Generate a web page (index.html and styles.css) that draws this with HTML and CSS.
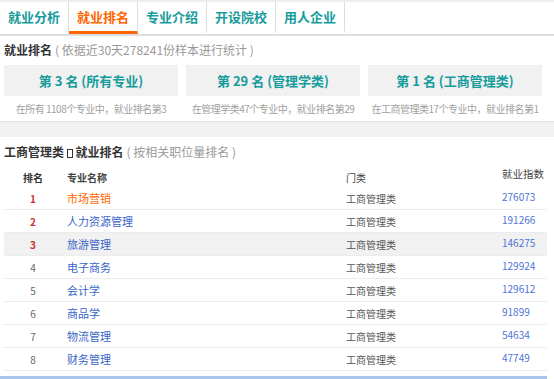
FILE: index.html
```html
<!DOCTYPE html>
<html lang="zh-CN">
<head>
<meta charset="utf-8">
<title>就业排名</title>
<link rel="stylesheet" href="styles.css">
</head>
<body>
<div class="tabs">
  <a class="tab">就业分析</a>
  <a class="tab active">就业排名</a>
  <a class="tab">专业介绍</a>
  <a class="tab">开设院校</a>
  <a class="tab">用人企业</a>
</div>

<section class="summary">
  <h2 class="title">就业排名<span class="sub">( 依据近30天278241份样本进行统计 )</span></h2>
  <div class="cards">
    <div class="card-wrap">
      <div class="card">第 3 名 (所有专业)</div>
      <p class="caption">在所有 1108个专业中，就业排名第3</p>
    </div>
    <div class="card-wrap">
      <div class="card">第 29 名 (管理学类)</div>
      <p class="caption">在管理学类47个专业中，就业排名第29</p>
    </div>
    <div class="card-wrap">
      <div class="card">第 1 名 (工商管理类)</div>
      <p class="caption">在工商管理类17个专业中，就业排名第1</p>
    </div>
  </div>
</section>
<div class="band"></div>

<section class="ranking">
  <h2 class="title">工商管理类 <span class="tofu"></span> 就业排名<span class="sub">( 按相关职位量排名 )</span></h2>
  <div class="rank-table">
    <div class="row head">
      <span class="c-rank strong">排名</span>
      <span class="c-name strong">专业名称</span>
      <span class="c-cat">门类</span>
      <span class="c-idx">就业指数</span>
    </div>
    <div class="row"><span class="c-rank top">1</span><a class="c-name hot">市场营销</a><span class="c-cat">工商管理类</span><span class="c-idx">276073</span></div>
    <div class="row"><span class="c-rank top">2</span><a class="c-name">人力资源管理</a><span class="c-cat">工商管理类</span><span class="c-idx">191266</span></div>
    <div class="row hl"><span class="c-rank top">3</span><a class="c-name">旅游管理</a><span class="c-cat">工商管理类</span><span class="c-idx">146275</span></div>
    <div class="row"><span class="c-rank">4</span><a class="c-name">电子商务</a><span class="c-cat">工商管理类</span><span class="c-idx">129924</span></div>
    <div class="row"><span class="c-rank">5</span><a class="c-name">会计学</a><span class="c-cat">工商管理类</span><span class="c-idx">129612</span></div>
    <div class="row"><span class="c-rank">6</span><a class="c-name">商品学</a><span class="c-cat">工商管理类</span><span class="c-idx">91899</span></div>
    <div class="row"><span class="c-rank">7</span><a class="c-name">物流管理</a><span class="c-cat">工商管理类</span><span class="c-idx">54634</span></div>
    <div class="row"><span class="c-rank">8</span><a class="c-name">财务管理</a><span class="c-cat">工商管理类</span><span class="c-idx">47749</span></div>
  </div>
  <div class="scrollbar"></div>
</section>
</body>
</html>
```

FILE: styles.css
```css
* { box-sizing: border-box; }
html, body { margin: 0; padding: 0; background: #fff; }
body {
  font-family: "Noto Sans CJK SC", "Liberation Sans", sans-serif;
  color: #333;
  width: 554px;
  overflow: hidden;
}

.tabs {
  display: flex;
  border-top: 2px solid #eceef0;
  border-bottom: 2px solid #dedede;
  height: 36px;
}
.tab {
  display: block;
  height: 32px;
  padding: 0 8px;
  line-height: 29px;
  font-size: 13px;
  font-weight: bold;
  color: #169c9c;
  border-right: 1px solid #dedede;
  border-bottom: 3px solid transparent;
  cursor: pointer;
}
.tab.active {
  color: #ff6600;
  border-bottom-color: #ff6600;
}

.title {
  margin: 0;
  padding-left: 4px;
  font-size: 12px;
  font-weight: bold;
  line-height: 20px;
  color: #333;
  white-space: nowrap;
}
.sub {
  font-weight: normal;
  font-size: 12px;
  color: #999;
  margin-left: 3px;
}

.summary {
  padding-top: 4px;
  padding-bottom: 5px;
  border-bottom: 1px solid #e2e2e2;
}
.cards {
  display: flex;
  gap: 8px;
  padding-left: 4px;
  margin-top: 5px;
}
.card-wrap { width: 174px; }
.card {
  height: 31px;
  background: #f1f1f1;
  color: #169c9c;
  font-weight: bold;
  font-size: 13px;
  line-height: 31px;
  text-align: center;
}
.caption {
  margin: 6px 0 0;
  font-size: 10px;
  letter-spacing: -0.5px;
  line-height: 14px;
  color: #a0a0a0;
  text-align: center;
  white-space: nowrap;
}

.band {
  height: 15px;
  background: #f1f1f1;
}

.ranking { padding-top: 6px; }
.ranking .title { line-height: 18px; }
.tofu {
  display: inline-block;
  width: 6px;
  height: 9px;
  border: 1px solid #333;
  vertical-align: -1px;
}

.rank-table {
  margin: 4px 0 0 4px;
  width: 543px;
}
.row {
  display: grid;
  grid-template-columns: 58px 279px 156px 50px;
  height: 23px;
  border-bottom: 1px solid #ececec;
  align-items: center;
  font-size: 11px;
}
.row > * { white-space: nowrap; }
.row .c-rank { text-align: center; font-size: 10px; color: #666; }
.row .c-rank.top { color: #cc3333; font-weight: bold; }
.row .c-name { padding-left: 5px; color: #3a66c8; font-size: 11px; }
.row .c-name.hot { color: #ff6600; }
.row .c-cat { padding-left: 5px; font-size: 10px; color: #555; }
.row .c-idx {
  padding-left: 5px;
  font-size: 10px;
  color: #4f74d9;
  align-self: start;
  padding-top: 2px;
}
.row.hl { background: #f1f1f1; }

.row.head {
  height: 22px;
  border-bottom: none;
  align-items: end;
  padding-bottom: 2px;
}
.row.head > * { font-size: 10px; color: #444; }
.row.head .strong { font-weight: bold; color: #333; }
.row.head .c-name { color: #444; }
.row.head .c-idx { align-self: start; padding-top: 1px; font-size: 10.5px; color: #444; }

.scrollbar {
  margin-top: 5px;
  width: 547px;
  height: 3px;
  background: #aac3ea;
}
```
